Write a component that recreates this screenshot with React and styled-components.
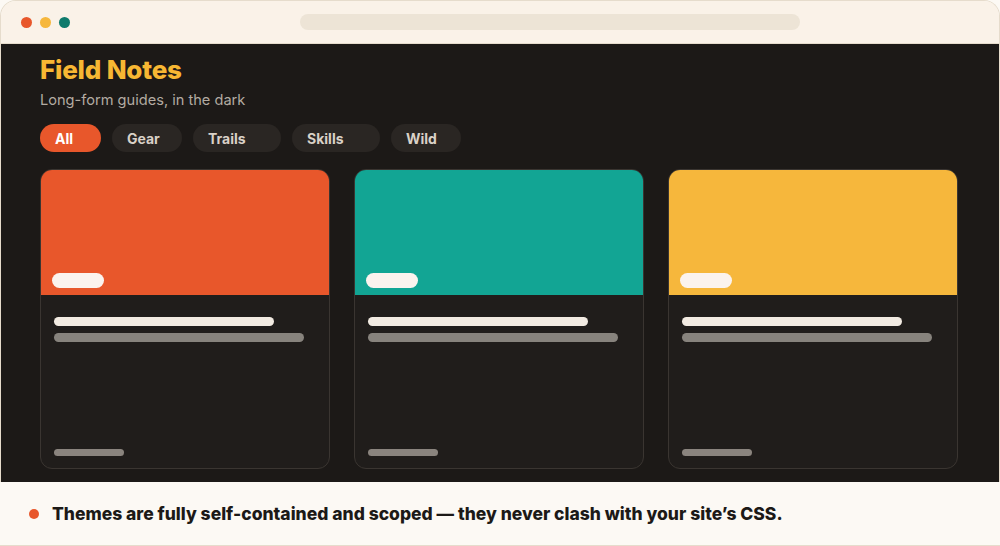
import React from 'react'
import styled, { createGlobalStyle } from 'styled-components'

const GlobalStyle = createGlobalStyle`
  html, body {
    margin: 0;
    padding: 0;
    background: #fcf9f4;
  }
  * { box-sizing: border-box; }
`

const Page = styled.div`
  width: 1000px;
  height: 546px;
  display: flex;
  flex-direction: column;
  font-family: Inter, "Open Sans", sans-serif;
  background: #fcf9f4;
`

const Window = styled.div`
  height: 482px;
  display: flex;
  flex-direction: column;
  border: 1px solid #e6dccc;
  border-bottom: none;
  border-radius: 16px 16px 0 0;
  overflow: hidden;
`

const TitleBar = styled.div`
  height: 43px;
  flex-shrink: 0;
  display: flex;
  align-items: center;
  padding: 0 0 0 20px;
  background: #faf2e8;
  border-bottom: 1px solid #e6dccc;
`

const Dots = styled.div`
  display: flex;
  gap: 8px;
`

const Dot = styled.span`
  width: 11px;
  height: 11px;
  border-radius: 50%;
  background: ${({ $color }) => $color};
`

const AddressBar = styled.div`
  width: 500px;
  height: 16px;
  border-radius: 8px;
  background: #ede4d6;
  margin-left: 230px;
`

const Main = styled.main`
  flex: 1;
  background: #1c1917;
  padding: 10px 39px 0;
`

const Title = styled.h1`
  margin: 0;
  font-size: 26px;
  line-height: 32px;
  font-weight: 800;
  color: #f7b733;
  letter-spacing: -0.2px;
`

const Subtitle = styled.p`
  margin: 4px 0 0;
  font-size: 14.6px;
  line-height: 20px;
  color: #b3aba2;
`

const Filters = styled.div`
  display: flex;
  gap: 11px;
  margin-top: 14px;
`

const Chip = styled.button`
  width: ${({ $w }) => $w}px;
  height: 28px;
  padding: 0 0 0 15px;
  text-align: left;
  border: none;
  border-radius: 14px;
  font-family: inherit;
  font-size: 14px;
  font-weight: 700;
  color: ${({ $active }) => ($active ? '#ffffff' : '#d9d1c7')};
  background: ${({ $active }) => ($active ? '#e8572b' : '#2a2623')};
`

const Grid = styled.div`
  display: grid;
  grid-template-columns: repeat(3, 290px);
  gap: 24px;
  margin-top: 17px;
`

const Card = styled.article`
  height: 300px;
  border: 1px solid #3a3531;
  border-radius: 12px;
  overflow: hidden;
  background: #201d1b;
  display: flex;
  flex-direction: column;
`

const Cover = styled.div`
  height: 126px;
  margin: -1px -1px 0;
  background: ${({ $color }) => $color};
  display: flex;
  align-items: flex-end;
  padding: 0 0 7px 12px;
`

const Tag = styled.span`
  width: 52px;
  height: 15px;
  border-radius: 8px;
  background: #fbf3ee;
`

const Body = styled.div`
  flex: 1;
  display: flex;
  flex-direction: column;
  padding: 22px 13px 12px;
`

const Bar = styled.span`
  display: block;
  width: ${({ $w }) => $w}px;
  height: ${({ $h }) => $h || 9}px;
  border-radius: 5px;
  background: ${({ $color }) => $color};
  margin-top: ${({ $mt }) => $mt || 0}px;
`

const Spacer = styled.div`
  flex: 1;
`

const Footer = styled.footer`
  flex: 1;
  display: flex;
  align-items: center;
  gap: 13px;
  padding-left: 29px;
  background: #fcf9f4;
  border-bottom: 1px solid #e6dccc;
`

const Bullet = styled.span`
  width: 10px;
  height: 10px;
  border-radius: 50%;
  background: #e8572b;
`

const Note = styled.p`
  margin: 0;
  font-size: 17.5px;
  font-weight: 800;
  color: #1c1917;
`

const filters = [
  { label: 'All', w: 61, active: true },
  { label: 'Gear', w: 70 },
  { label: 'Trails', w: 88 },
  { label: 'Skills', w: 88 },
  { label: 'Wild', w: 70 },
]

const covers = ['#e8572b', '#12a594', '#f6b73c']

export default function App() {
  return (
    <Page>
      <GlobalStyle />
      <Window>
        <TitleBar>
          <Dots>
            <Dot $color="#e8572b" />
            <Dot $color="#f6b73c" />
            <Dot $color="#0f7b6c" />
          </Dots>
          <AddressBar />
        </TitleBar>
        <Main>
          <Title>Field Notes</Title>
          <Subtitle>Long-form guides, in the dark</Subtitle>
          <Filters>
            {filters.map((f) => (
              <Chip key={f.label} $w={f.w} $active={f.active}>
                {f.label}
              </Chip>
            ))}
          </Filters>
          <Grid>
            {covers.map((c) => (
              <Card key={c}>
                <Cover $color={c}>
                  <Tag />
                </Cover>
                <Body>
                  <Bar $w={220} $color="#f2ebe2" />
                  <Bar $w={250} $color="#87837d" $mt={7} />
                  <Spacer />
                  <Bar $w={70} $h={7} $color="#8a847e" />
                </Body>
              </Card>
            ))}
          </Grid>
        </Main>
      </Window>
      <Footer>
        <Bullet />
        <Note>Themes are fully self-contained and scoped — they never clash with your site’s CSS.</Note>
      </Footer>
    </Page>
  )
}
